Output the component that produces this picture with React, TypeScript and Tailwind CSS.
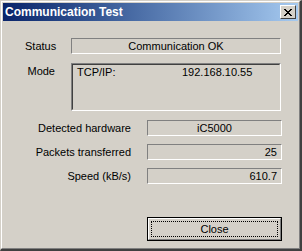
export default function App() {
  const font = { fontFamily: '"Liberation Sans", Arial, sans-serif' };
  return (
    <div
      className="w-[302px] h-[251px] bg-[#d4d0c8] border-t border-l border-t-[#d4d0c8] border-l-[#d4d0c8] border-r-2 border-b-2 border-r-[#404040] border-b-[#404040] text-[11px] leading-[13px] text-black"
      style={font}
    >
      <div className="h-full border-t border-l border-t-white border-l-white border-r border-b border-r-[#808080] border-b-[#808080] p-px flex flex-col">
        {/* Title bar */}
        <div className="h-[18px] flex items-center justify-between pl-[2px] pr-[2px] bg-gradient-to-r from-[#0a246a] to-[#a6caf0]">
          <span className="text-white font-bold text-[12px] leading-[14px]">Communication Test</span>
          <div className="w-[16px] h-[14px] bg-[#d4d0c8] border border-t-white border-l-white border-r-[#404040] border-b-[#404040] flex items-center justify-center">
            <svg width="8" height="7" viewBox="0 0 8 7" shapeRendering="crispEdges">
              <path d="M0 0h2v1H0zM6 0h2v1H6zM1 1h2v1H1zM5 1h2v1H5zM2 2h4v1H2zM3 3h2v1H3zM2 4h4v1H2zM1 5h2v1H1zM5 5h2v1H5zM0 6h2v1H0zM6 6h2v1H6z" fill="#000" />
            </svg>
          </div>
        </div>

        {/* Content */}
        <div className="flex flex-col pl-[22px]">
          <div className="flex items-center mt-[17px]">
            <span className="w-[30px] text-right">Status</span>
            <div className="ml-[16px] w-[210px] h-[16px] border border-t-[#808080] border-l-[#808080] border-r-white border-b-white flex items-center justify-center">
              Communication OK
            </div>
          </div>

          <div className="flex items-start mt-[9px]">
            <span className="w-[30px] text-right mt-[2px]">Mode</span>
            <div className="ml-[16px] w-[210px] h-[48px] border border-t-[#808080] border-l-[#808080] border-r-white border-b-white">
              <div className="h-full border border-t-[#404040] border-l-[#404040] border-r-[#d4d0c8] border-b-[#d4d0c8] flex pl-[4px] pt-[1px]">
                <span className="w-[105px]">TCP/IP:</span>
                <span>192.168.10.55</span>
              </div>
            </div>
          </div>
        </div>

        <div className="flex flex-col gap-[8px] mt-[9px]">
          {[
            { label: "Detected hardware", value: "iC5000", center: true },
            { label: "Packets transferred", value: "25", center: false },
            { label: "Speed (kB/s)", value: "610.7", center: false },
          ].map((row) => (
            <div key={row.label} className="flex items-center">
              <span className="w-[128px] text-right">{row.label}</span>
              <div
                className={
                  row.center
                    ? "ml-[16px] w-[135px] h-[16px] border border-t-[#808080] border-l-[#808080] border-r-white border-b-white flex items-center justify-center"
                    : "ml-[16px] w-[135px] h-[16px] border border-t-[#808080] border-l-[#808080] border-r-white border-b-white flex items-center justify-end pr-[4px]"
                }
              >
                {row.value}
              </div>
            </div>
          ))}
        </div>

        <div className="flex mt-[33px] pl-[144px]">
          <button className="w-[135px] h-[24px] border border-black bg-[#d4d0c8] p-0" style={font}>
            <div className="h-full border border-t-white border-l-white border-r-[#808080] border-b-[#808080] p-[2px]">
              <div className="h-full border border-dotted border-black flex items-center justify-center text-[11px]">
                Close
              </div>
            </div>
          </button>
        </div>
      </div>
    </div>
  );
}
